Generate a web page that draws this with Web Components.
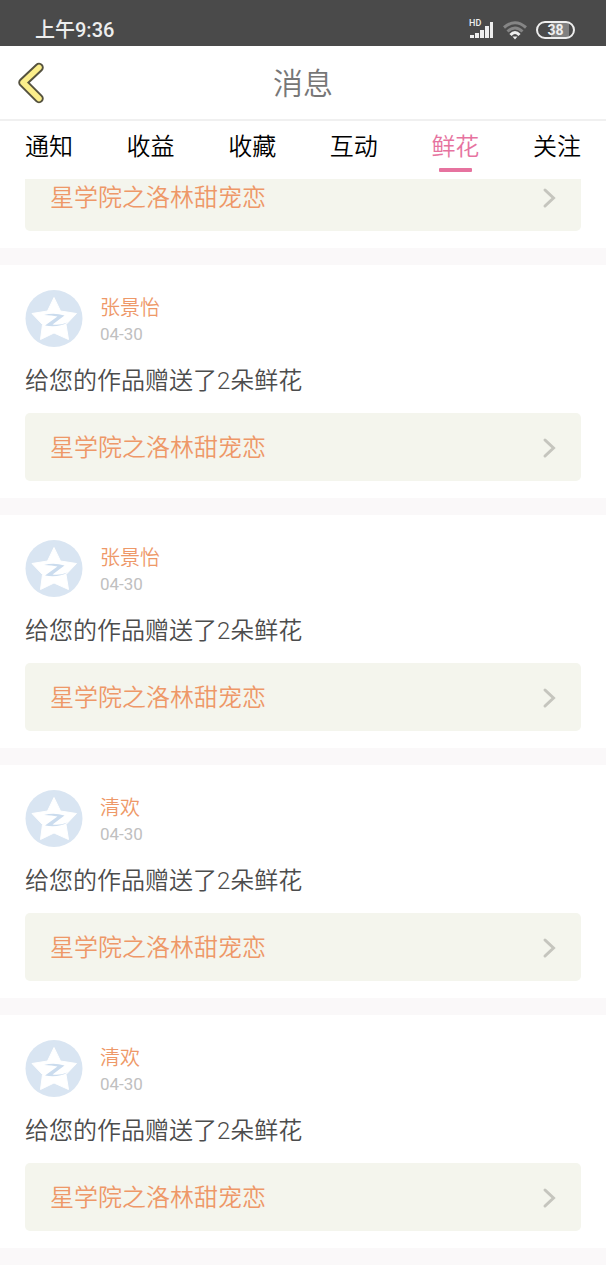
<!DOCTYPE html>
<html lang="zh-CN">
<head>
<meta charset="utf-8">
<meta name="viewport" content="width=device-width, initial-scale=1">
<title>消息</title>
<style>
  body {
    margin: 0;
    background: #fff;
    font-family: Roboto, "Noto Sans CJK SC", sans-serif;
    font-weight: 350;
  }
</style>
</head>
<body>
<message-page></message-page>

<template id="status-bar">
  <style>
    :host {
      display: flex;
      align-items: center;
      flex: none;
      box-sizing: border-box;
      height: 46px;
      padding: 13px 31px 0 35px;
      background: #4a4a4a;
      color: #eee;
      font-size: 20px;
      line-height: 32px;
      font-weight: 500;
    }

    .status__icons {
      display: flex;
      align-items: center;
      gap: 9px;
      margin-left: auto;
    }

    svg {
      display: block;
    }

    .status__network {
      position: relative;
    }

    .status__hd {
      position: absolute;
      top: -1px;
      left: 0;
      font-size: 9px;
      line-height: 8px;
    }

    .status__battery {
      box-sizing: border-box;
      width: 39px;
      height: 18px;
      border: 2px solid #eee;
      border-radius: 9px;
      background: linear-gradient(90deg, #4a4a4a 38%, #808080 38%, #808080 88%, #4a4a4a 88%);
      font-size: 14px;
      line-height: 14px;
      font-weight: 700;
      text-align: center;
    }
  </style>
  <span>上午9:36</span>
  <div class="status__icons">
    <span class="status__network">
      <span class="status__hd">HD</span>
      <svg width="25" height="20" viewBox="0 0 25 20" fill="#eee">
        <path d="M1 15h4v3H1zM6 13h4v5H6zM11 10h4v8h-4zM16 6h4v12h-4zM21 2h3v16h-3z"/>
      </svg>
    </span>
    <svg width="24" height="20" viewBox="0 0 24 20" fill="none" stroke-width="3">
      <path d="M1 7.500Q12-2 23 7.500" stroke="#858585"/>
      <path d="M4.500 11.500Q12 4.500 19.500 11.500" stroke="#858585"/>
      <path d="M7.500 15Q12 10 16.500 15" stroke="#eee"/>
      <path d="M9.500 16.500h5L12 19.500z" fill="#eee"/>
    </svg>
    <span class="status__battery">38</span>
  </div>
</template>

<template id="page-header">
  <style>
    :host {
      display: grid;
      grid-template-columns: 64px 1fr 64px;
      align-items: center;
      flex: none;
      height: 73px;
      border-bottom: 2px solid #f0f0f0;
    }

    button {
      padding: 0 0 0 17px;
      border: 0;
      background: none;
      cursor: pointer;
    }

    svg {
      display: block;
    }

    h1 {
      margin: 0;
      padding-top: 3px;
      color: #777;
      font-size: 30px;
      line-height: 44px;
      font-weight: inherit;
      text-align: center;
    }
  </style>
  <button type="button" aria-label="返回">
    <svg width="29" height="42" viewBox="0 0 29 42" fill="none" stroke-linecap="round" stroke-linejoin="round">
      <path d="M22 5.500L6 20.500L22 36.500" stroke="#55523f" stroke-width="9.500"/>
      <path d="M22 5.500L6 20.500L22 36.500" stroke="#fbee8b" stroke-width="5.500"/>
    </svg>
  </button>
  <h1><slot></slot></h1>
</template>

<template id="tab-item">
  <style>
    :host {
      display: block;
    }

    button {
      display: flex;
      flex-direction: column;
      align-items: center;
      gap: 3px;
      padding: 0;
      border: 0;
      background: none;
      color: #000;
      font: inherit;
      cursor: pointer;
    }

    button::after {
      content: '';
      width: 33px;
      height: 4px;
      border-radius: 1px;
    }

    :host([active]) button {
      color: #e6739f;
    }

    :host([active]) button::after {
      background: #e6739f;
    }
  </style>
  <button type="button"><slot></slot></button>
</template>

<template id="tab-bar">
  <style>
    :host {
      display: flex;
      justify-content: space-between;
      flex: none;
      box-sizing: border-box;
      height: 58px;
      padding: 8px 25px 0;
      font-size: 24px;
      line-height: 36px;
    }
  </style>
  <slot></slot>
</template>

<template id="work-link">
  <style>
    :host {
      display: block;
    }

    a {
      display: flex;
      align-items: center;
      justify-content: space-between;
      box-sizing: border-box;
      height: 68px;
      padding: 2px 25px 0;
      border-radius: 5px;
      background: #f4f5ed;
      color: #ee9868;
      font-size: 24px;
      line-height: 36px;
      text-decoration: none;
    }

    svg {
      flex: none;
    }
  </style>
  <a href="#work">
    <slot></slot>
    <svg width="14" height="22" viewBox="0 0 14 22" fill="none" stroke="#c5c5be" stroke-width="3" stroke-linecap="round">
      <path d="M3 3L11.500 11L3 19"/>
    </svg>
  </a>
</template>

<template id="gift-message">
  <style>
    :host {
      display: block;
      flex: none;
      padding: 25px 25px 17px;
      border-bottom: 17px solid #faf8f9;
    }

    .gift__sender {
      display: flex;
      align-items: center;
      gap: 17px;
    }

    .gift__name {
      color: #ee9868;
      font-size: 20px;
      line-height: 30px;
    }

    .gift__date {
      color: #c0c0c0;
      font-size: 17px;
      line-height: 22px;
      font-weight: 400;
    }

    p {
      margin: 15px 0 14px;
      color: #4c4c4c;
      font-size: 24px;
      line-height: 36px;
    }

    :host([compact]) .gift__sender,
    :host([compact]) p {
      display: none;
    }
  </style>
  <div class="gift__sender">
    <svg width="58" height="58" viewBox="0 0 58 58">
      <circle cx="29" cy="28.500" r="28.500" fill="#d9e5f2"/>
      <path d="M29 7.500L35.500 21L51.500 23.500L41 34.500L43.500 49.500L29 43L15.500 49.500L17.500 34.500L7 23.500L22.500 21Z" fill="#fff" stroke="#fff" stroke-width="1" stroke-linejoin="round"/>
      <path d="M19 25Q29 22.500 39.500 25.500L27.500 34.500Q35 35.500 42.500 32.500Q33 38 20 35.500L32.500 26.500Q27 25 19 25Z" fill="#cbdcee"/>
    </svg>
    <div>
      <div class="gift__name"><slot name="name"></slot></div>
      <div class="gift__date"><slot name="date"></slot></div>
    </div>
  </div>
  <p><slot name="text"></slot></p>
  <work-link><slot name="work"></slot></work-link>
</template>

<template id="message-page">
  <style>
    :host {
      display: flex;
      flex-direction: column;
      height: 100vh;
    }

    /* the list is held at its lower end */
    main {
      display: flex;
      flex: 1;
      flex-direction: column;
      justify-content: flex-end;
      min-height: 0;
      padding-bottom: 15px;
      overflow: hidden;
    }
  </style>
  <status-bar></status-bar>
  <page-header>消息</page-header>
  <tab-bar>
    <tab-item>通知</tab-item>
    <tab-item>收益</tab-item>
    <tab-item>收藏</tab-item>
    <tab-item>互动</tab-item>
    <tab-item active>鲜花</tab-item>
    <tab-item>关注</tab-item>
  </tab-bar>
  <main></main>
</template>

<script>
  class BaseElement extends HTMLElement {
    constructor() {
      super();
      this.shadow = this.attachShadow({ mode: 'open' });
      const template = document.getElementById(this.localName);
      this.shadow.appendChild(template.content.cloneNode(true));
    }
  }

  class StatusBar extends BaseElement {}
  class PageHeader extends BaseElement {}
  class TabBar extends BaseElement {}
  class TabItem extends BaseElement {}
  class WorkLink extends BaseElement {}
  class GiftMessage extends BaseElement {}

  const work = '星学院之洛林甜宠恋';
  const text = '给您的作品赠送了2朵鲜花';
  const messages = [
    { work },
    { name: '张景怡', date: '04-30', text, work },
    { name: '张景怡', date: '04-30', text, work },
    { name: '清欢', date: '04-30', text, work },
    { name: '清欢', date: '04-30', text, work }
  ];

  class MessagePage extends BaseElement {
    connectedCallback() {
      const list = this.shadow.querySelector('main');
      messages.forEach((message) => {
        const item = document.createElement('gift-message');
        item.toggleAttribute('compact', !message.name);
        Object.keys(message).forEach((key) => {
          const span = document.createElement('span');
          span.slot = key;
          span.textContent = message[key];
          item.appendChild(span);
        });
        list.appendChild(item);
      });
    }
  }

  window.customElements.define('status-bar', StatusBar);
  window.customElements.define('page-header', PageHeader);
  window.customElements.define('tab-bar', TabBar);
  window.customElements.define('tab-item', TabItem);
  window.customElements.define('work-link', WorkLink);
  window.customElements.define('gift-message', GiftMessage);
  window.customElements.define('message-page', MessagePage);
</script>
</body>
</html>
